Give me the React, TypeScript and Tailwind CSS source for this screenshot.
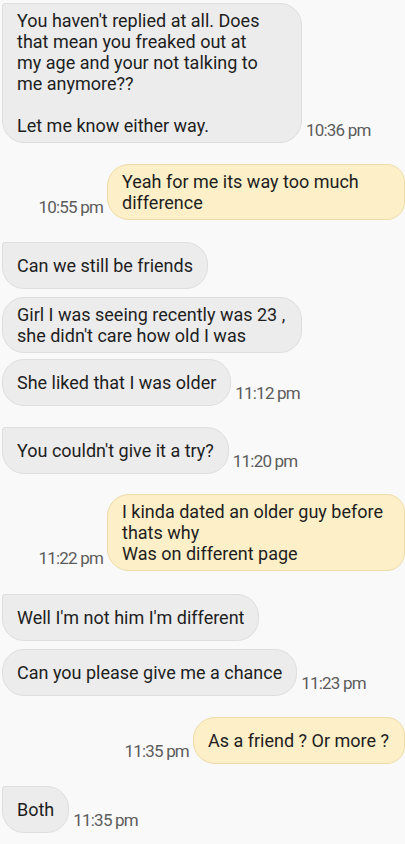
import React from 'react';

type Msg = {
  side: 'in' | 'out';
  text: string;
  time?: string;
  gap: number;
  tail?: boolean;
  wide?: boolean;
};

const messages: Msg[] = [
  {
    side: 'in',
    text: "You haven't replied at all. Does\nthat mean you freaked out at\nmy age and your not talking to\nme anymore??\n\nLet me know either way.",
    time: '10:36 pm',
    gap: 3,
    tail: true,
    wide: true,
  },
  { side: 'out', text: 'Yeah for me its way too much\ndifference', time: '10:55 pm', gap: 21, wide: true },
  { side: 'in', text: 'Can we still be friends', gap: 22, tail: true },
  { side: 'in', text: "Girl I was seeing recently was 23 ,\nshe didn't care how old I was", gap: 8, wide: true },
  { side: 'in', text: 'She liked that I was older', time: '11:12 pm', gap: 6 },
  { side: 'in', text: "You couldn't give it a try?", time: '11:20 pm', gap: 21, tail: true },
  {
    side: 'out',
    text: 'I kinda dated an older guy before\nthats why\nWas on different page',
    time: '11:22 pm',
    gap: 20,
    wide: true,
  },
  { side: 'in', text: "Well I'm not him I'm different", gap: 23, tail: true },
  { side: 'in', text: 'Can you please give me a chance', time: '11:23 pm', gap: 8 },
  { side: 'out', text: 'As a friend ? Or more ?', time: '11:35 pm', gap: 21 },
  { side: 'in', text: 'Both', time: '11:35 pm', gap: 22, tail: true },
];

function Time({ value }: { value: string }) {
  return (
    <span className="mb-[3px] shrink-0 whitespace-nowrap text-[17px] leading-[20px] tracking-[-0.8px] text-[#5c5c5c]">
      {value}
    </span>
  );
}

function Bubble({ msg }: { msg: Msg }) {
  const pad = msg.wide ? 'py-[6px]' : 'py-[12px]';
  const base = `whitespace-pre border px-[14px] text-[18px] leading-[21px] text-[#1e1e1e] ${pad}`;
  if (msg.side === 'in') {
    return (
      <div
        className={`${base} ${msg.wide ? 'w-[300px]' : ''} ${
          msg.tail ? 'rounded-[22px] rounded-tl-[3px]' : 'rounded-[22px]'
        } bg-[#ececec] border-[#dedede]`}
      >
        {msg.text}
      </div>
    );
  }
  return (
    <div
      className={`${base} ${msg.wide ? 'w-[298px]' : 'pr-[15px]'} rounded-[22px] rounded-r-[18px] bg-[#fdefc7] border-[#eedba8]`}
    >
      {msg.text}
    </div>
  );
}

export default function App() {
  return (
    <div
      className="h-[844px] w-[405px] overflow-hidden bg-[#f9f9f9]"
      style={{ fontFamily: 'Roboto, "Noto Sans", sans-serif' }}
    >
      {messages.map((m, i) => (
        <div
          key={i}
          style={{ marginTop: m.gap }}
          className={
            m.side === 'in'
              ? 'flex items-end gap-[4px] pl-[2px]'
              : 'flex items-end justify-end gap-[4px] pr-0'
          }
        >
          {m.side === 'out' && m.time && <Time value={m.time} />}
          <Bubble msg={m} />
          {m.side === 'in' && m.time && <Time value={m.time} />}
        </div>
      ))}
    </div>
  );
}
